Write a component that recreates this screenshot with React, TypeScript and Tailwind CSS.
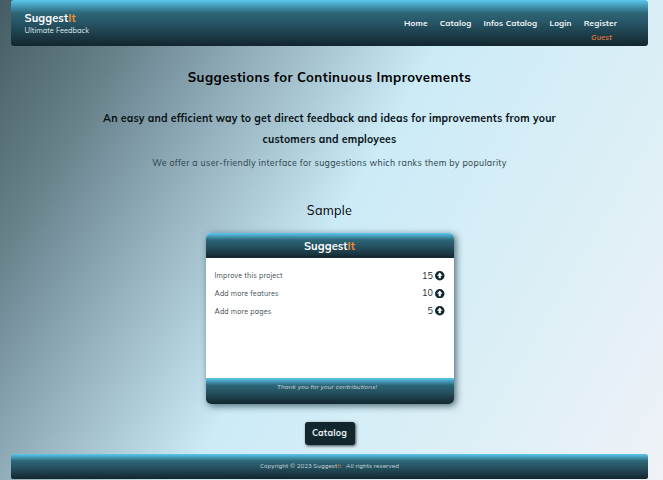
const bar =
  "bg-[linear-gradient(180deg,#5bc8ee_0%,#2d6678_28%,#25505f_55%,#12262e_100%)]";

function Brand() {
  return (
    <>
      Suggest<span className="text-[#f08c35]">It</span>
    </>
  );
}

function ArrowUpCircle() {
  return (
    <svg viewBox="0 0 20 20" className="h-[9.5px] w-[9.5px]">
      <circle cx="10" cy="10" r="10" fill="#12262e" />
      <path d="M10 3.4 4.2 9.8h3.5v5.6h4.6V9.8h3.5z" fill="#fff" />
    </svg>
  );
}

const rows = [
  { label: "Improve this project", votes: 15 },
  { label: "Add more features", votes: 10 },
  { label: "Add more pages", votes: 5 },
];

export default function App() {
  return (
    <div className="flex h-[480px] w-[663px] flex-col overflow-hidden bg-[linear-gradient(120deg,#465c64_0%,#68838a_16%,#78939f_21%,#cbebf7_49.5%,#deeff6_78%,#eff2f7_100%)] pr-[15px] pl-[11px] font-[Mulish,Lato,'Noto_Sans',sans-serif] whitespace-nowrap text-black">
      <header className={`flex h-[46px] shrink-0 justify-between rounded-[3px] pr-[31px] pl-[13.5px] ${bar}`}>
        <div className="pt-[11px] text-white">
          <h1 className="text-[11px] leading-[14px] font-bold tracking-[0.1px]"><Brand /></h1>
          <p className="text-[7.5px] leading-[11px] text-[#dce5e8]">Ultimate Feedback</p>
        </div>
        <div className="flex flex-col items-end pt-[17px]">
          <nav className="flex gap-[12.2px] text-[8.2px] leading-[13px] font-bold tracking-[0.12px] text-[#eef5f7]">
            <a>Home</a>
            <a>Catalog</a>
            <a>Infos Catalog</a>
            <a>Login</a>
            <a>Register</a>
          </nav>
          <span className="mt-[1px] mr-[5px] text-[7.5px] leading-[12px] font-bold tracking-[0.05px] text-[#c96f3c] italic">Guest</span>
        </div>
      </header>

      <main className="flex h-[407.5px] shrink-0 flex-col items-center text-center">
        <h2 className="mt-[21px] text-[13.2px] leading-[20px] font-bold tracking-[0.45px]">
          Suggestions for Continuous Improvements
        </h2>
        <h3 className="mt-[21px] text-[10.5px] leading-[21px] font-bold tracking-[0.2px] text-[#071014]">
          An easy and efficient way to get direct feedback and ideas for improvements from your
          <br />
          customers and employees
        </h3>
        <p className="mt-[5.5px] text-[8.8px] leading-[14px] tracking-[0.32px] text-[#2b3d44]">
          We offer a user-friendly interface for suggestions which ranks them by popularity
        </p>
        <h4 className="mt-[31px] text-[12.5px] leading-[18px] tracking-[0.3px]">Sample</h4>

        <section className="mt-[14.5px] flex h-[171px] w-[248px] shrink-0 flex-col overflow-hidden rounded-[5px] bg-white shadow-[2px_2px_7px_rgba(18,50,58,0.7)]">
          <div className={`h-[25px] shrink-0 text-[11px] leading-[26px] font-bold tracking-[0.1px] text-white ${bar}`}>
            <Brand />
          </div>
          <ul className="flex h-[120px] shrink-0 flex-col px-[9px] pt-[9px]">
            {rows.map((row) => (
              <li key={row.label} className="flex h-[17.6px] items-center justify-between">
                <span className="pt-[2px] text-[7.2px] tracking-[0.15px] text-[#465158]">{row.label}</span>
                <span className="flex items-center gap-[2px] text-[9px] leading-[12px] tracking-[0.1px] text-[#222d32]">
                  {row.votes}
                  <ArrowUpCircle />
                </span>
              </li>
            ))}
          </ul>
          <div className={`flex-1 pr-[5px] text-[6.4px] leading-[18px] tracking-[0.1px] text-[#cbd6d9] italic ${bar}`}>
            Thank you for your contributions!
          </div>
        </section>

        <button className="mt-[17.5px] h-[23px] w-[50px] shrink-0 rounded-[3px] bg-[#12262e] text-[9px] leading-[22px] font-bold tracking-[0.2px] text-[#e5eef1] shadow-[1px_1px_3px_rgba(0,0,0,0.7)]">
          Catalog
        </button>
      </main>

      <footer className={`h-[25.5px] shrink-0 rounded-[2px] text-center text-[6.1px] leading-[25px] tracking-[0.1px] text-[#cbd6d9] ${bar}`}>
        Copyright © 2023 Suggest<span className="text-[#c96f3c]">It</span>
        <span className="ml-[5px]">All rights reserved</span>
      </footer>
    </div>
  );
}
